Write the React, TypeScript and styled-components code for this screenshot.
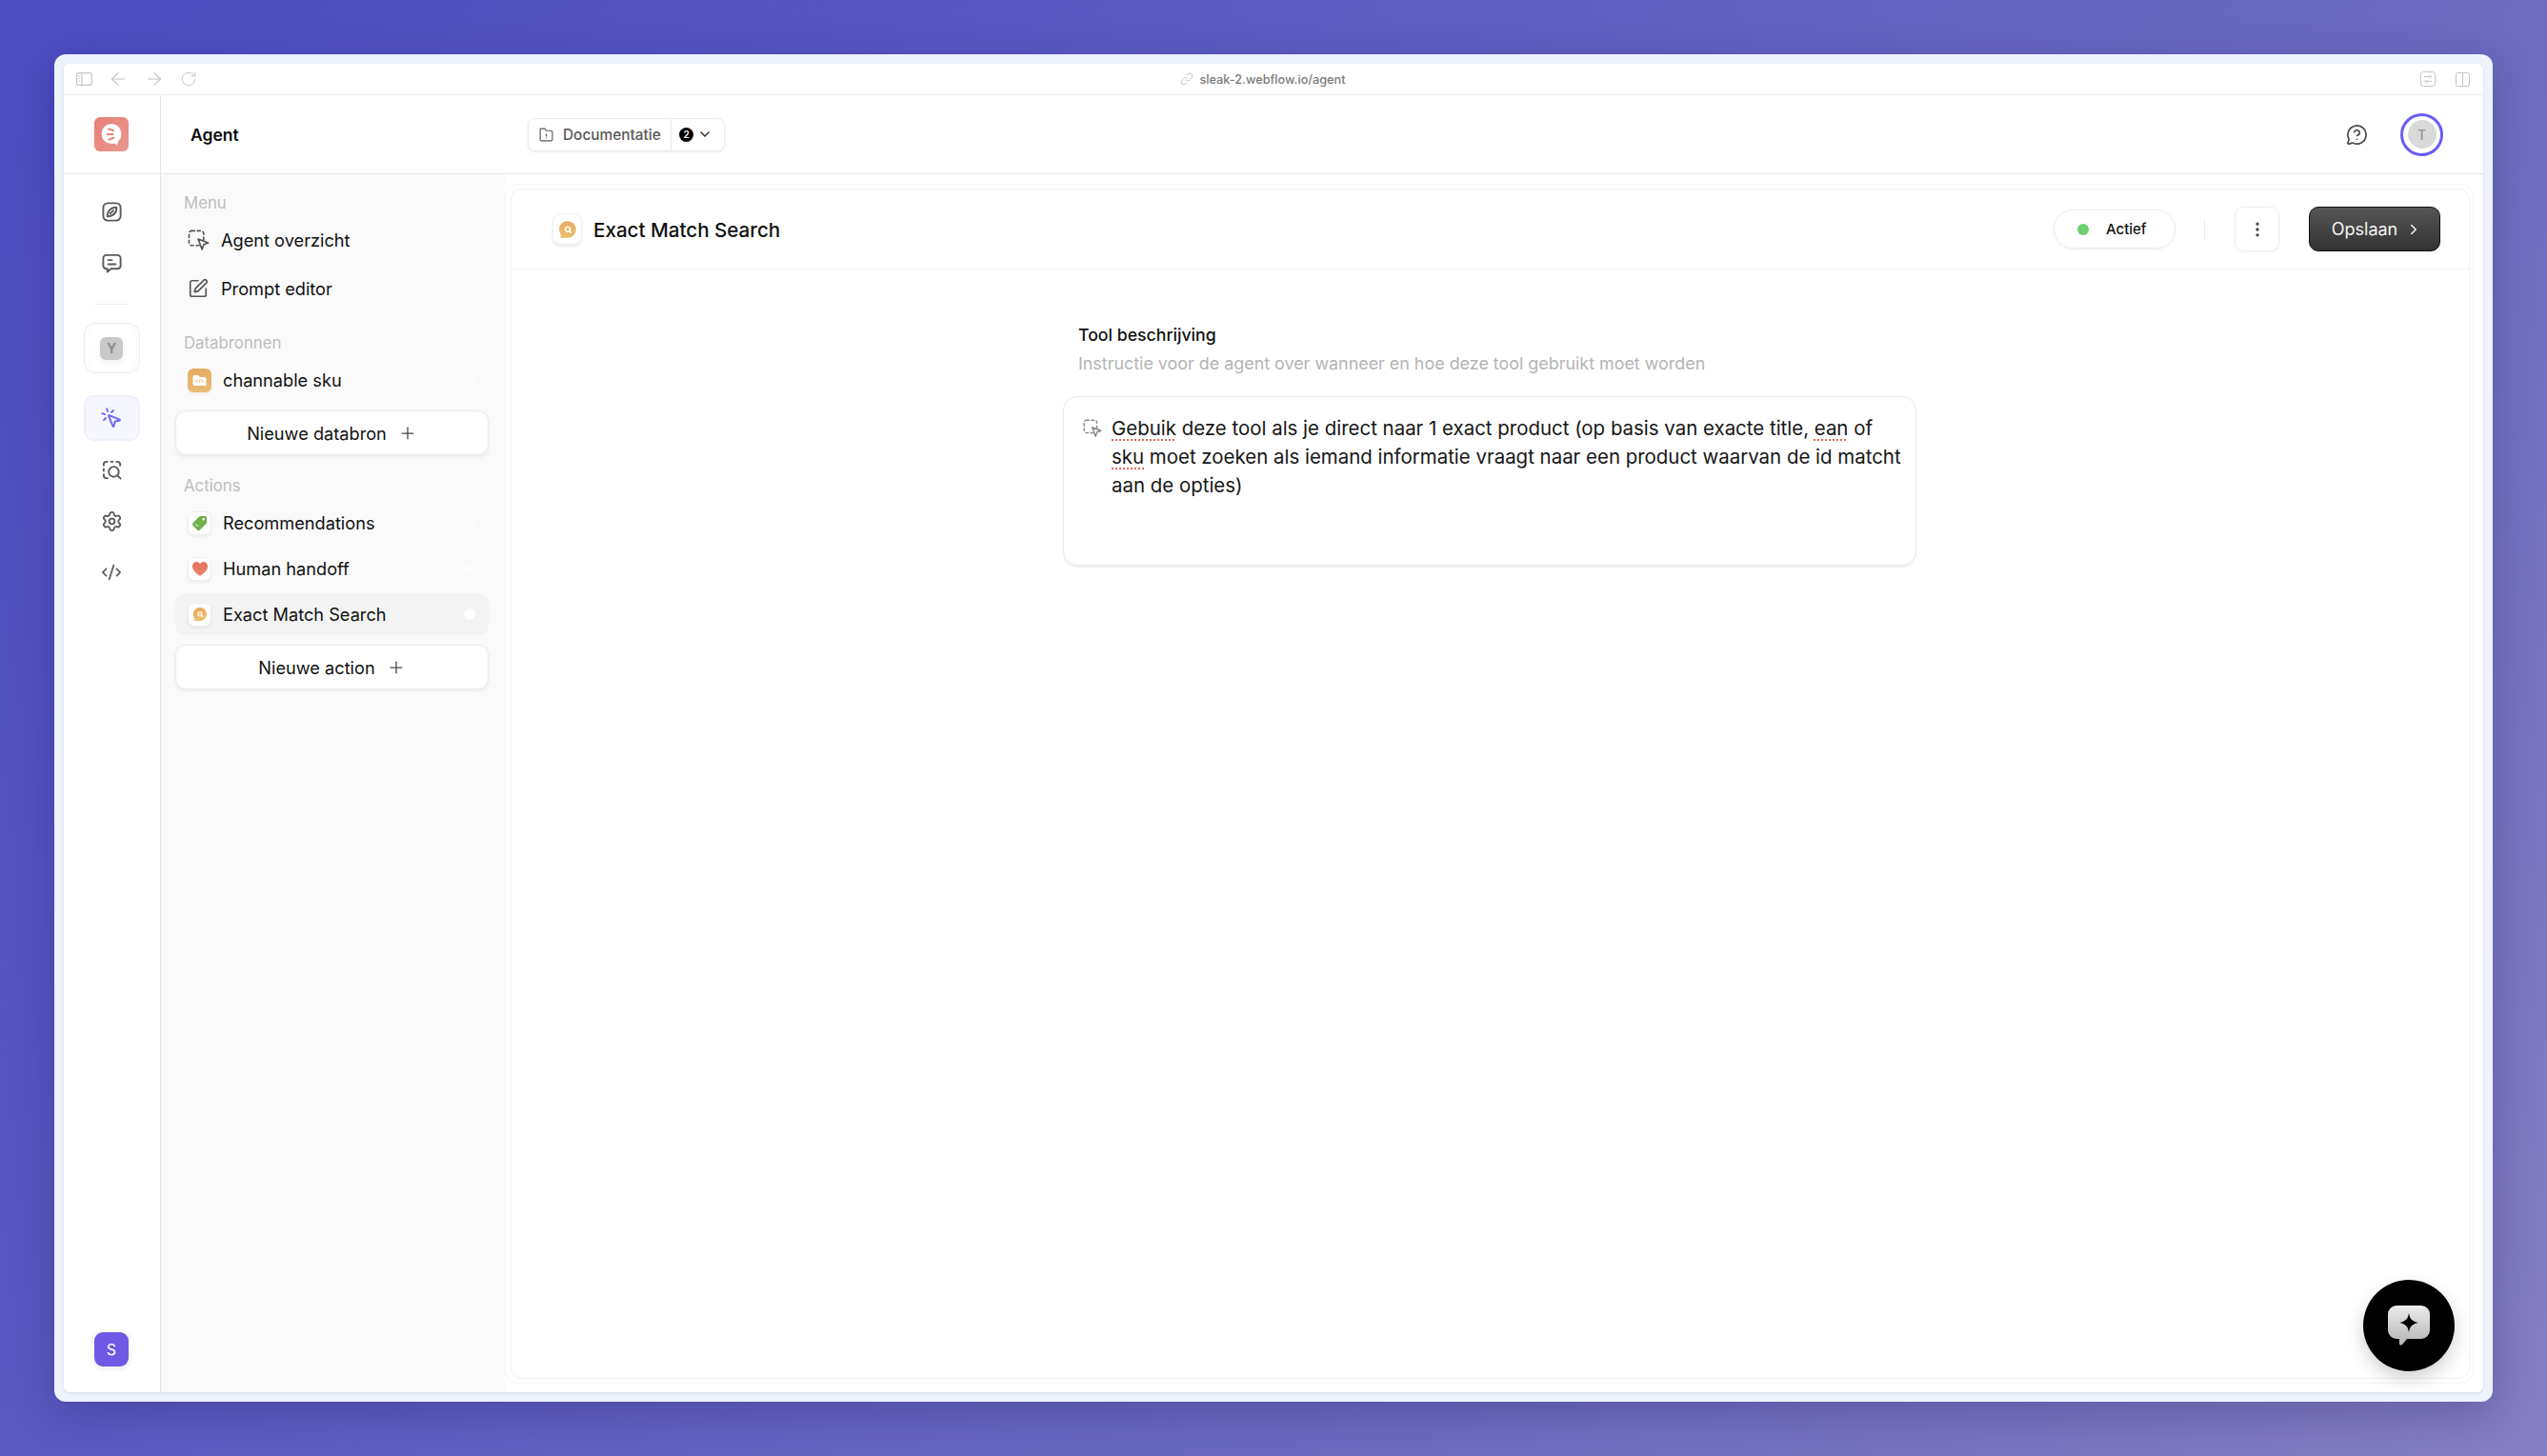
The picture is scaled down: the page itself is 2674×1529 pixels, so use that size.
import styled, { createGlobalStyle } from "styled-components";
import {
  ArrowLeft,
  ArrowRight,
  ChevronDown,
  ChevronRight,
  CodeXml,
  EllipsisVertical,
  Link,
  MessageCircleQuestion,
  MousePointerClick,
  Plus,
  RotateCw,
  Settings,
  SquarePen,
} from "lucide-react";
import type { ReactNode } from "react";

const GlobalStyle = createGlobalStyle`
  html, body {
    margin: 0;
    padding: 0;
  }
  body {
    font-family: Inter, "Liberation Sans", sans-serif;
    color: #111;
    -webkit-font-smoothing: antialiased;
  }
  * {
    box-sizing: border-box;
  }
`;

const Page = styled.div`
  width: 2674px;
  height: 1529px;
  padding: 57px 57px 57px 57px;
  background: linear-gradient(128deg, #4c4bc1 0%, #6c6bbf 69%, #857ec2 100%);
  overflow: hidden;
`;

const Frame = styled.div`
  width: 2560px;
  height: 1415px;
  padding: 10px;
  background: #eef2fb;
  border-radius: 12px;
  box-shadow: 0 12px 44px rgba(28, 22, 90, 0.28);
`;

const Win = styled.div`
  position: relative;
  display: flex;
  flex-direction: column;
  height: 100%;
  background: #fff;
  border-radius: 6px;
  overflow: hidden;
  box-shadow: 0 1px 3px rgba(40, 40, 90, 0.12);
`;

const BrowserBar = styled.div`
  display: grid;
  grid-template-columns: 1fr auto 1fr;
  align-items: center;
  height: 33px;
  padding: 0 14px 0 13px;
  border-bottom: 1px solid #f0f0f0;
  color: #c4c4c4;
`;

const BarGroup = styled.div<{ $end?: boolean; $gap: number }>`
  display: flex;
  align-items: center;
  gap: ${(p) => p.$gap}px;
  justify-content: ${(p) => (p.$end ? "flex-end" : "flex-start")};
`;

const UrlText = styled.div`
  display: flex;
  align-items: center;
  gap: 7px;
  margin-right: 22px;
  font-size: 12.7px;
  font-weight: 500;
  color: #7a7a7a;
`;

const TopBar = styled.div`
  display: flex;
  align-items: stretch;
  height: 83px;
  border-bottom: 1px solid #e6e6e6;
`;

const LogoCell = styled.div`
  display: flex;
  align-items: center;
  justify-content: center;
  width: 102px;
  flex: none;
  border-right: 1px solid #e4e4e4;
  padding-right: 1px;
`;

const PageTitle = styled.div`
  display: flex;
  align-items: center;
  width: 385px;
  padding-left: 31px;
  font-size: 17.5px;
  font-weight: 600;
  color: #0c0c0c;
`;

const TopCenter = styled.div`
  flex: 1;
  display: flex;
  align-items: center;
`;

const TopRight = styled.div`
  display: flex;
  align-items: center;
  gap: 34px;
  padding-right: 42px;
  color: #4a4a4a;
`;

const DocButton = styled.div`
  display: flex;
  align-items: stretch;
  width: 207px;
  height: 35px;
  background: #fff;
  border: 1px solid #ebebeb;
  border-radius: 8px;
  box-shadow: 0 1px 3px rgba(0, 0, 0, 0.08);
`;

const DocLabel = styled.div`
  display: flex;
  align-items: center;
  gap: 9px;
  width: 150px;
  padding-left: 10px;
  font-size: 15.4px;
  font-weight: 500;
  color: #585858;
  border-right: 1px solid #e8e8e8;
`;

const DocCount = styled.div`
  flex: 1;
  display: flex;
  align-items: center;
  gap: 4px;
  padding-left: 8px;
  color: #333;
`;

const CountDot = styled.span`
  display: flex;
  align-items: center;
  justify-content: center;
  width: 15px;
  height: 15px;
  border-radius: 50%;
  background: #000;
  color: #fff;
  font-size: 10px;
  font-weight: 600;
`;

const Avatar = styled.div`
  display: flex;
  align-items: center;
  justify-content: center;
  width: 45px;
  height: 45px;
  border-radius: 50%;
  border: 3px solid #6a5cf6;
  background: #fff;

  span {
    display: flex;
    align-items: center;
    justify-content: center;
    width: 30px;
    height: 30px;
    border-radius: 50%;
    background: #d9d9d9;
    color: #969696;
    font-size: 14px;
    font-weight: 500;
  }
`;

const Body = styled.div`
  flex: 1;
  display: flex;
  min-height: 0;
`;

const Rail = styled.nav`
  display: flex;
  flex-direction: column;
  align-items: center;
  width: 102px;
  flex: none;
  padding: 15px 1px 27px 0;
  border-right: 1px solid #e4e4e4;
  color: #5a5a5a;
`;

const RailItem = styled.div<{ $active?: boolean }>`
  display: flex;
  align-items: center;
  justify-content: center;
  width: 59px;
  height: 48px;
  margin-bottom: 6px;
  border-radius: 10px;
  color: ${(p) => (p.$active ? "#6a66f0" : "inherit")};
  background: ${(p) => (p.$active ? "#f5f6ff" : "transparent")};
  border: ${(p) => (p.$active ? "2px solid #eff0fe" : "none")};
`;

const RailRule = styled.div`
  width: 36px;
  height: 1px;
  margin: 13px 0 19px;
  background: #eeeeee;
`;

const WorkspaceCard = styled.div`
  display: flex;
  align-items: center;
  justify-content: center;
  width: 59px;
  height: 53px;
  margin-bottom: 23px;
  border: 1px solid #ececec;
  border-radius: 12px;
  background: #fff;
  box-shadow: inset 0 0 10px rgba(0, 0, 0, 0.03);
`;

const WorkspaceLetter = styled.div`
  display: flex;
  align-items: center;
  justify-content: center;
  width: 24px;
  height: 24px;
  border-radius: 6px;
  background: #c9c9c9;
  color: #8b8b8b;
  font-size: 14px;
  font-weight: 700;
  box-shadow: 0 3px 6px rgba(0, 0, 0, 0.06);
`;

const UserBadge = styled.div`
  display: flex;
  align-items: center;
  justify-content: center;
  width: 36px;
  height: 36px;
  margin-top: auto;
  border-radius: 9px;
  background: #6f58e4;
  color: #fff;
  font-size: 16px;
  box-shadow: 0 1px 4px 3px rgba(0, 0, 0, 0.05);
`;

const Sidebar = styled.aside`
  display: flex;
  flex-direction: column;
  width: 361px;
  flex: none;
  padding: 20px 17px 0 15px;
  background: #fafafa;
`;

const Group = styled.div<{ $top?: number }>`
  margin-top: ${(p) => p.$top ?? 0}px;
`;

const GroupLabel = styled.div`
  height: 20px;
  line-height: 20px;
  margin: 0 0 7px 9px;
  font-size: 16.8px;
  color: #bdbdbd;
`;

const RowList = styled.div<{ $gap: number }>`
  display: flex;
  flex-direction: column;
  gap: ${(p) => p.$gap}px;
`;

const NavRow = styled.div<{ $selected?: boolean }>`
  display: flex;
  align-items: center;
  height: 44px;
  padding: 0 14px 0 13px;
  border-radius: 10px;
  font-size: 18.2px;
  color: #111;
  background: ${(p) => (p.$selected ? "#f3f3f3" : "transparent")};
`;

const RowIcon = styled.div`
  display: flex;
  align-items: center;
  width: 24px;
  flex: none;
  margin-right: 11px;
  color: #555;
`;

const ChipIcon = styled.div<{ $bare?: boolean }>`
  display: flex;
  align-items: center;
  justify-content: center;
  width: 25px;
  height: 25px;
  flex: none;
  margin: 0 12px 0 0;
  border-radius: 7px;
  background: ${(p) => (p.$bare ? "transparent" : "#fff")};
  border: ${(p) => (p.$bare ? "none" : "1px solid #eeeeee")};
  box-shadow: 0 2px 3px rgba(0, 0, 0, 0.06);
`;

const RowDot = styled.span<{ $on?: boolean }>`
  width: 12px;
  height: 12px;
  margin-left: auto;
  border-radius: 50%;
  background: ${(p) => (p.$on ? "#ffffff" : "#fcfcfc")};
`;

const AddButton = styled.div`
  display: flex;
  align-items: center;
  justify-content: center;
  gap: 12px;
  height: 47px;
  margin-top: 6px;
  background: #fff;
  border: 1px solid #ececec;
  border-radius: 11px;
  font-size: 18.2px;
  color: #111;
  box-shadow: 0 2px 4px rgba(0, 0, 0, 0.06);

  svg {
    color: #444;
  }
`;

const PanelShell = styled.div`
  flex: 1;
  margin: 10px 10px 9px 0;
  padding: 4px 3px 4px 5px;
  background: #ffffff;
  border: 1px solid #f5f5f5;
  border-radius: 14px;
`;

const Panel = styled.main`
  display: flex;
  flex-direction: column;
  height: 100%;
  background: #fff;
  border: 1px solid #f1f1f1;
  border-radius: 12px;
`;

const PanelHeader = styled.header`
  display: flex;
  align-items: center;
  height: 84px;
  flex: none;
  padding: 0 30px 0 43px;
  border-bottom: 1px solid #f3f3f3;
`;

const HeaderIcon = styled.div`
  display: flex;
  align-items: center;
  justify-content: center;
  width: 31px;
  height: 33px;
  margin-right: 12px;
  border: 1px solid #f0f0f0;
  border-radius: 9px;
  background: #fff;
  box-shadow: 0 2px 3px rgba(0, 0, 0, 0.08);
`;

const HeaderTitle = styled.h1`
  flex: 1;
  margin: 2px 0 0;
  font-size: 20.6px;
  font-weight: 500;
  color: #111;
`;

const StatusPill = styled.div`
  display: flex;
  align-items: center;
  gap: 18px;
  width: 128px;
  height: 41px;
  padding-left: 24px;
  border: 1px solid #ececec;
  border-radius: 21px;
  font-size: 15px;
  font-weight: 500;
  color: #111;
  box-shadow: 0 1px 3px rgba(0, 0, 0, 0.06);

  i {
    width: 12px;
    height: 12px;
    border-radius: 50%;
    background: #6fcf6f;
  }
`;

const HeaderRule = styled.div`
  width: 1px;
  height: 24px;
  margin: 0 31px 0 30px;
  background: #ececec;
`;

const IconButton = styled.div`
  display: flex;
  align-items: center;
  justify-content: center;
  width: 47px;
  height: 47px;
  margin-right: 31px;
  border: 1px solid #eeeeee;
  border-radius: 9px;
  color: #444;
  box-shadow: 0 1px 3px rgba(0, 0, 0, 0.05);
`;

const SaveButton = styled.div`
  display: flex;
  align-items: center;
  justify-content: center;
  gap: 8px;
  width: 138px;
  height: 47px;
  padding-left: 5px;
  border-radius: 10px;
  border: 1px solid #111;
  background: linear-gradient(180deg, #565656 0%, #323232 100%);
  color: #f4f4f4;
  font-size: 18px;
  font-weight: 400;
`;

const PanelBody = styled.div`
  flex: 1;
  padding: 57px 0 0 579px;
`;

const FieldTitle = styled.div`
  height: 24px;
  line-height: 24px;
  margin-left: 16px;
  font-size: 17.7px;
  font-weight: 500;
  color: #111;
`;

const FieldHint = styled.div`
  height: 24px;
  line-height: 24px;
  margin: 6px 0 22px 16px;
  font-size: 17.9px;
  color: #b4b4b4;
`;

const DescBox = styled.div`
  display: flex;
  width: 896px;
  height: 178px;
  padding: 18px 10px 0 20px;
  border: 1px solid #e9e9e9;
  border-radius: 15px;
  box-shadow: 0 2px 2px rgba(0, 0, 0, 0.06);
`;

const DescIcon = styled.div`
  flex: none;
  width: 30px;
  padding-top: 5px;
  color: #888;
`;

const DescText = styled.div`
  font-size: 20.45px;
  line-height: 30px;
  color: #161616;
`;

const DescLine = styled.div`
  white-space: nowrap;
`;

const Misspelt = styled.span`
  text-decoration: underline dotted #e2675c 2px;
  text-underline-offset: 4px;
`;

const ChatFab = styled.div`
  position: absolute;
  right: 30px;
  bottom: 22px;
  display: flex;
  align-items: center;
  justify-content: center;
  width: 96px;
  height: 96px;
  border-radius: 50%;
  background: #000;
  box-shadow: 0 8px 18px rgba(0, 0, 0, 0.18);
`;

const Outline = ({ size, children, width = 2 }: { size: number; children: ReactNode; width?: number }) => (
  <svg
    width={size}
    height={size}
    viewBox="0 0 24 24"
    fill="none"
    stroke="currentColor"
    strokeWidth={width}
    strokeLinecap="round"
    strokeLinejoin="round"
  >
    {children}
  </svg>
);

const CompassIcon = () => (
  <Outline size={23}>
    <rect x="2.5" y="2.5" width="19" height="19" rx="5" />
    <path d="M17 7c.3 4.5-2.200 8.800-8.500 10C7 17.300 6.800 16.800 7 15.500 8 10 12 7 17 7Z" />
    <path d="M10 14l3.500-3.500" />
  </Outline>
);

const MessageIcon = () => (
  <Outline size={23}>
    <path d="M6 3h12a3.500 3.500 0 0 1 3.500 3.500v8A3.500 3.500 0 0 1 18 18h-7l-4 3.500V18H6a3.500 3.500 0 0 1-3.500-3.500v-8A3.500 3.500 0 0 1 6 3Z" />
    <path d="M8 8.500h4M8 13h8" />
  </Outline>
);

const DashedCursor = ({ size }: { size: number }) => (
  <Outline size={size} width={1.7}>
    <rect x="1.500" y="1.500" width="16" height="16" rx="3" strokeDasharray="3.200 3" />
    <path d="M11.500 10.500l11 4.200-4.800 1.800-1.900 5.300-4.300-11.300Z" fill="#fff" />
  </Outline>
);

const DashedSearch = () => (
  <Outline size={23}>
    <path d="M3 7V6a3 3 0 0 1 3-3h1M11 3h2M17 3h1a3 3 0 0 1 3 3v1M3 11v2M3 17v1a3 3 0 0 0 3 3h1" />
    <circle cx="14" cy="14" r="5.500" />
    <path d="M18 18l3.500 3.500" />
  </Outline>
);

const FolderAlert = () => (
  <Outline size={17} width={1.6}>
    <path d="M4 3h6l2 3h7a2 2 0 0 1 2 2v11a2 2 0 0 1-2 2H5a2 2 0 0 1-2-2V4a1 1 0 0 1 1-1Z" />
    <path d="M12 11v3M12 17h0" />
  </Outline>
);

const Logo = () => (
  <svg width="36" height="36" viewBox="0 0 36 36">
    <defs>
      <linearGradient id="logoBg" x1="0" y1="0" x2="1" y2="1">
        <stop offset="0" stopColor="#e67f76" />
        <stop offset="0.6" stopColor="#e98e85" />
        <stop offset="1" stopColor="#e6978f" />
      </linearGradient>
    </defs>
    <rect width="36" height="36" rx="6" fill="url(#logoBg)" />
    <circle cx="18" cy="17.500" r="10.500" fill="#fff" />
    <path d="M24 29.500l-4.500-3 6-3Z" fill="#fff" />
    <path d="M15 12.500l5 1.500M13.500 18h6M15.500 23.500l5-1.800" stroke="#e6857c" strokeWidth="2" strokeLinecap="round" />
  </svg>
);

const FolderChip = () => (
  <svg width="25" height="25" viewBox="0 0 25 25">
    <defs>
      <linearGradient id="folderBg" x1="0" y1="0" x2="0" y2="1">
        <stop offset="0" stopColor="#e3ad62" />
        <stop offset="1" stopColor="#eabb78" />
      </linearGradient>
    </defs>
    <rect width="25" height="25" rx="6" fill="url(#folderBg)" />
    <path d="M7 7h4l2 2h5a1.500 1.500 0 0 1 1.500 1.500v6A1.500 1.500 0 0 1 18 18H7a1.500 1.500 0 0 1-1.500-1.500v-8A1.500 1.500 0 0 1 7 7Z" fill="#fff" />
    <path d="M10.500 11.500L9 13l1.500 1.500M14.500 11.500L16 13l-1.500 1.500M13.200 11l-1.400 4" stroke="#e3ad62" strokeWidth="0.8" fill="none" />
  </svg>
);

const TagGlyph = () => (
  <svg width="19" height="19" viewBox="0 0 19 19">
    <path d="M10.500 2h5a1.500 1.500 0 0 1 1.500 1.500v5a2 2 0 0 1-.6 1.400l-6.500 6.500a2 2 0 0 1-2.800 0l-4.500-4.500a2 2 0 0 1 0-2.800L9.100 2.600A2 2 0 0 1 10.500 2Z" fill="#6eb04a" />
    <circle cx="13.700" cy="5.300" r="1.300" fill="#fff" />
    <path d="M5.500 10.500l2.500 2" stroke="#cfe8bf" strokeWidth="1.200" strokeLinecap="round" />
  </svg>
);

const HeartGlyph = () => (
  <svg width="18" height="17" viewBox="0 0 18 17">
    <defs>
      <linearGradient id="heartBg" x1="0" y1="0" x2="0" y2="1">
        <stop offset="0" stopColor="#e5705f" />
        <stop offset="1" stopColor="#e98a6c" />
      </linearGradient>
    </defs>
    <path d="M9 16C4 12.500 1 9.500 1 5.800 1 3 3.100 1 5.300 1 6.800 1 8.200 1.800 9 3.200 9.800 1.800 11.200 1 12.700 1 14.900 1 17 3 17 5.800 17 9.500 14 12.500 9 16Z" fill="url(#heartBg)" />
  </svg>
);

const SearchBubble = ({ size, id }: { size: number; id: string }) => (
  <svg width={size} height={size} viewBox="0 0 16 16">
    <defs>
      <linearGradient id={id} x1="0" y1="0" x2="0" y2="1">
        <stop offset="0" stopColor="#e9a863" />
        <stop offset="1" stopColor="#ecc06c" />
      </linearGradient>
    </defs>
    <path d="M8 1a7 7 0 1 1 0 14H1.500c.8-.8 1-1.700.6-3A7 7 0 0 1 8 1Z" fill={`url(#${id})`} />
    <circle cx="8" cy="7.800" r="2" fill="none" stroke="#fff" strokeWidth="1.200" />
    <path d="M9.500 9.300l1.200 1.200" stroke="#fff" strokeWidth="1.200" strokeLinecap="round" />
  </svg>
);

const SparkBubble = () => (
  <svg width="44" height="42" viewBox="0 0 44 42">
    <defs>
      <linearGradient id="fabBg" x1="0" y1="0" x2="0" y2="1">
        <stop offset="0" stopColor="#ececec" />
        <stop offset="1" stopColor="#b5b5b5" />
      </linearGradient>
    </defs>
    <path d="M9 0h26a9 9 0 0 1 9 9v17a9 9 0 0 1-9 9H20l-5 6c-1 1-3 .6-3-1v-5H9a9 9 0 0 1-9-9V9a9 9 0 0 1 9-9Z" fill="url(#fabBg)" />
    <path d="M22 8c1 6 3.500 8.500 10 10-6.500 1.500-9 4-10 10-1-6-3.500-8.500-10-10 6.500-1.500 9-4 10-10Z" fill="#000" />
  </svg>
);

export default function App() {
  return (
    <>
      <GlobalStyle />
      <Page>
        <Frame>
          <Win>
            <BrowserBar>
              <BarGroup $gap={16}>
                <svg width="17" height="14" viewBox="0 0 17 14" fill="none" stroke="currentColor" strokeWidth="1.100">
                  <rect x="0.600" y="0.600" width="15.800" height="12.800" rx="2" />
                  <path d="M6 1v12M2.300 4h2M2.300 6.500h2M2.300 9h2" />
                </svg>
                <ArrowLeft size={22} strokeWidth={1.200} />
                <ArrowRight size={22} strokeWidth={1.200} />
                <RotateCw size={18} strokeWidth={1.300} />
              </BarGroup>
              <UrlText>
                <Link size={14} strokeWidth={1.400} color="#bdbdbd" />
                sleak-2.webflow.io/agent
              </UrlText>
              <BarGroup $end $gap={21}>
                <svg width="16" height="16" viewBox="0 0 16 16" fill="none" stroke="currentColor" strokeWidth="1">
                  <rect x="0.500" y="0.500" width="15" height="15" rx="3" />
                  <path d="M4 5.500h8M4 10.500h8" />
                  <circle cx="9.500" cy="5.500" r="1.200" fill="#fff" />
                  <circle cx="6.500" cy="10.500" r="1.200" fill="#fff" />
                </svg>
                <svg width="15" height="15" viewBox="0 0 15 15" fill="none" stroke="currentColor" strokeWidth="1">
                  <rect x="0.500" y="0.500" width="14" height="14" rx="2" />
                  <path d="M7.500 1v13" />
                </svg>
              </BarGroup>
            </BrowserBar>

            <TopBar>
              <LogoCell>
                <Logo />
              </LogoCell>
              <PageTitle>Agent</PageTitle>
              <TopCenter>
                <DocButton>
                  <DocLabel>
                    <FolderAlert />
                    Documentatie
                  </DocLabel>
                  <DocCount>
                    <CountDot>2</CountDot>
                    <ChevronDown size={16} strokeWidth={2.200} />
                  </DocCount>
                </DocButton>
              </TopCenter>
              <TopRight>
                <MessageCircleQuestion size={23} strokeWidth={1.800} />
                <Avatar>
                  <span>T</span>
                </Avatar>
              </TopRight>
            </TopBar>

            <Body>
              <Rail>
                <RailItem>
                  <CompassIcon />
                </RailItem>
                <RailItem>
                  <MessageIcon />
                </RailItem>
                <RailRule />
                <WorkspaceCard>
                  <WorkspaceLetter>Y</WorkspaceLetter>
                </WorkspaceCard>
                <RailItem $active>
                  <MousePointerClick size={24} strokeWidth={1.900} />
                </RailItem>
                <RailItem>
                  <DashedSearch />
                </RailItem>
                <RailItem>
                  <Settings size={23} strokeWidth={1.900} />
                </RailItem>
                <RailItem>
                  <CodeXml size={22} strokeWidth={1.900} />
                </RailItem>
                <UserBadge>S</UserBadge>
              </Rail>

              <Sidebar>
                <Group>
                  <GroupLabel>Menu</GroupLabel>
                  <RowList $gap={7}>
                    <NavRow>
                      <RowIcon>
                        <DashedCursor size={23} />
                      </RowIcon>
                      Agent overzicht
                    </NavRow>
                    <NavRow>
                      <RowIcon>
                        <SquarePen size={22} strokeWidth={1.800} />
                      </RowIcon>
                      Prompt editor
                    </NavRow>
                  </RowList>
                </Group>

                <Group $top={25}>
                  <GroupLabel>Databronnen</GroupLabel>
                  <RowList $gap={4}>
                    <NavRow>
                      <ChipIcon $bare>
                        <FolderChip />
                      </ChipIcon>
                      channable sku
                      <RowDot />
                    </NavRow>
                    <AddButton>
                      Nieuwe databron
                      <Plus size={20} strokeWidth={1.500} />
                    </AddButton>
                  </RowList>
                </Group>

                <Group $top={22}>
                  <GroupLabel>Actions</GroupLabel>
                  <RowList $gap={4}>
                    <NavRow>
                      <ChipIcon>
                        <TagGlyph />
                      </ChipIcon>
                      Recommendations
                      <RowDot />
                    </NavRow>
                    <NavRow>
                      <ChipIcon>
                        <HeartGlyph />
                      </ChipIcon>
                      Human handoff
                      <RowDot />
                    </NavRow>
                    <NavRow $selected>
                      <ChipIcon>
                        <SearchBubble size={16} id="bubbleSmall" />
                      </ChipIcon>
                      Exact Match Search
                      <RowDot $on />
                    </NavRow>
                    <AddButton>
                      Nieuwe action
                      <Plus size={20} strokeWidth={1.500} />
                    </AddButton>
                  </RowList>
                </Group>
              </Sidebar>

              <PanelShell>
                <Panel>
                  <PanelHeader>
                    <HeaderIcon>
                      <SearchBubble size={20} id="bubbleLarge" />
                    </HeaderIcon>
                    <HeaderTitle>Exact Match Search</HeaderTitle>
                    <StatusPill>
                      <i />
                      Actief
                    </StatusPill>
                    <HeaderRule />
                    <IconButton>
                      <EllipsisVertical size={20} strokeWidth={2} />
                    </IconButton>
                    <SaveButton>
                      Opslaan
                      <ChevronRight size={18} strokeWidth={2} />
                    </SaveButton>
                  </PanelHeader>
                  <PanelBody>
                    <FieldTitle>Tool beschrijving</FieldTitle>
                    <FieldHint>Instructie voor de agent over wanneer en hoe deze tool gebruikt moet worden</FieldHint>
                    <DescBox>
                      <DescIcon>
                        <DashedCursor size={20} />
                      </DescIcon>
                      <DescText>
                        <DescLine>
                          <Misspelt>Gebuik</Misspelt> deze tool als je direct naar 1 exact product (op basis van exacte
                          title, <Misspelt>ean</Misspelt> of
                        </DescLine>
                        <DescLine>
                          <Misspelt>sku</Misspelt> moet zoeken als iemand informatie vraagt naar een product waarvan de
                          id matcht
                        </DescLine>
                        <DescLine>aan de opties)</DescLine>
                      </DescText>
                    </DescBox>
                  </PanelBody>
                </Panel>
              </PanelShell>
            </Body>

            <ChatFab>
              <SparkBubble />
            </ChatFab>
          </Win>
        </Frame>
      </Page>
    </>
  );
}
